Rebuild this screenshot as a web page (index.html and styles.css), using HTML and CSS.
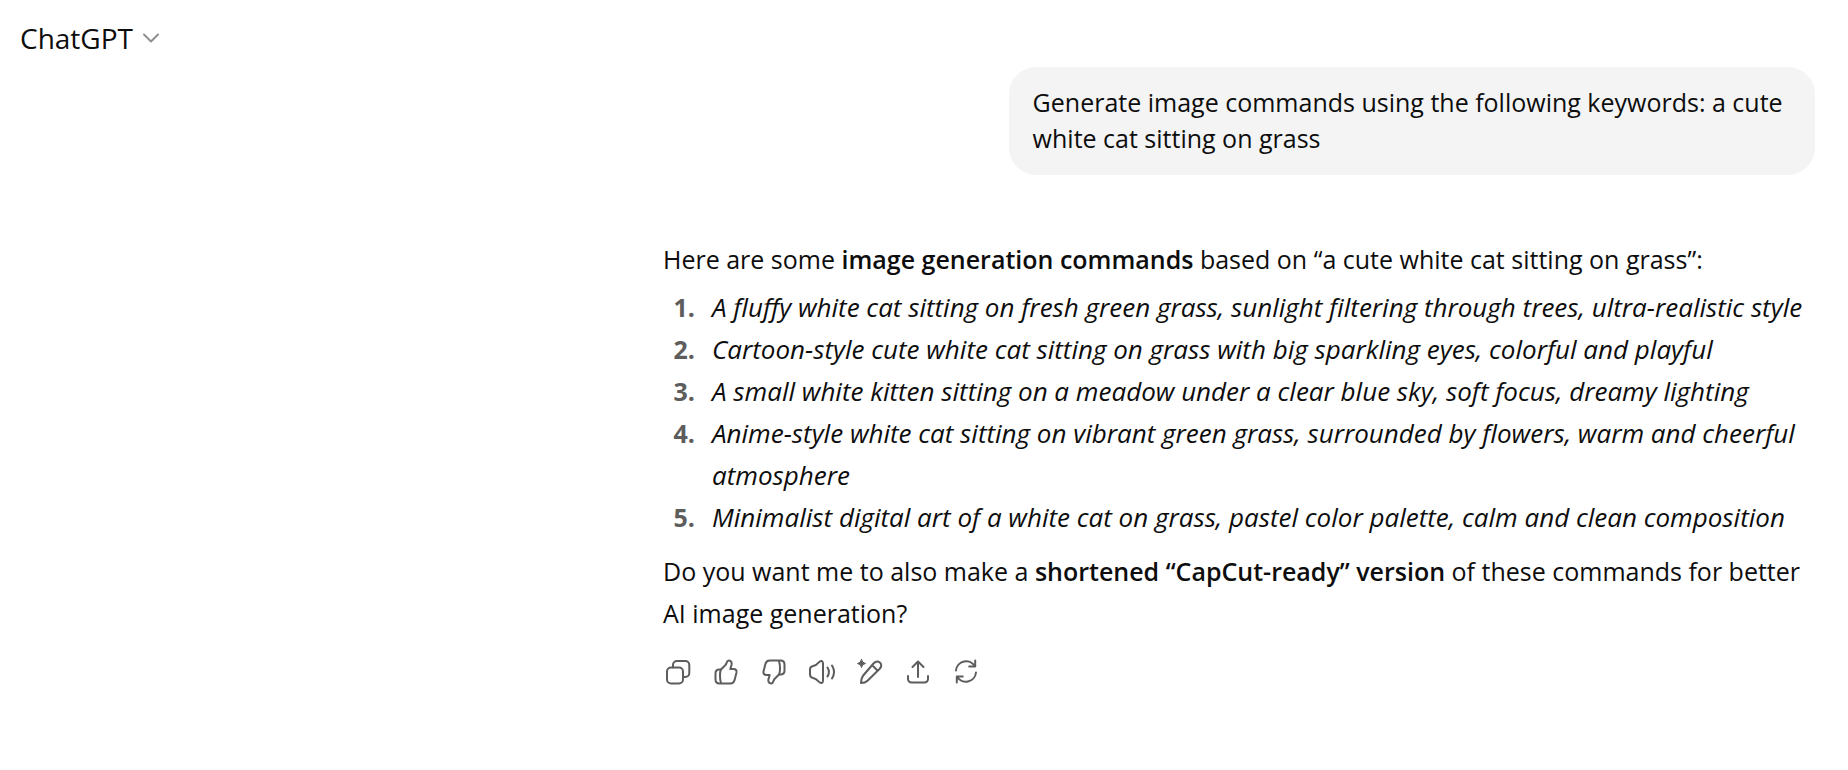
FILE: index.html
```html
<!DOCTYPE html>
<html lang="en">
<head>
<meta charset="utf-8">
<meta name="viewport" content="width=device-width, initial-scale=1">
<title>ChatGPT</title>
<link rel="stylesheet" href="styles.css">
</head>
<body>
<header class="topbar">
  <button class="model-switch" type="button" aria-haspopup="menu">
    <span>ChatGPT</span>
    <svg class="chevron" viewBox="0 0 16 10" aria-hidden="true"><path d="M1 1.5 8 8.5 15 1.5"/></svg>
  </button>
</header>
<main class="thread">
  <section class="turn turn-user">
    <p class="bubble">Generate image commands using the following keywords: a cute white cat sitting on grass</p>
  </section>
  <article class="turn turn-reply">
    <p class="reply-text">Here are some <strong>image generation commands</strong> based on “a cute white cat sitting on grass”:</p>
    <ol class="prompts">
      <li><em>A fluffy white cat sitting on fresh green grass, sunlight filtering through trees, ultra-realistic style</em></li>
      <li><em>Cartoon-style cute white cat sitting on grass with big sparkling eyes, colorful and playful</em></li>
      <li><em>A small white kitten sitting on a meadow under a clear blue sky, soft focus, dreamy lighting</em></li>
      <li><em>Anime-style white cat sitting on vibrant green grass, surrounded by flowers, warm and cheerful atmosphere</em></li>
      <li><em>Minimalist digital art of a white cat on grass, pastel color palette, calm and clean composition</em></li>
    </ol>
    <p class="reply-text">Do you want me to also make a <strong>shortened “CapCut-ready” version</strong> of these commands for better AI image generation?</p>
    <div class="actions">
      <button class="action" type="button" aria-label="Copy">
        <svg class="icon" viewBox="0 0 30 30"><rect x="4" y="10.5" width="16" height="16" rx="4"/><path d="M10 10.5V8a4 4 0 0 1 4-4h8.300a4 4 0 0 1 4 4v8a4 4 0 0 1-4 4H20"/></svg>
      </button>
      <button class="action" type="button" aria-label="Good response">
        <svg class="icon" viewBox="0 0 30 30"><path d="M10 12.500 14.500 8C15.900 6.500 15.500 3.500 17.800 3.500c2.700 0 3.200 2.500 2.700 4.500L19.300 12H22.500c2.300 0 3.400 1.500 3 3.500L23.600 23c-.6 2.400-2.100 3.500-4.300 3.500H8.500C6 26.500 4.500 25 4.500 22.500V16.500c0-2.500 1.500-4 4-4Z"/><path d="M10 12.500C8.500 15 8.800 22 10 26"/></svg>
      </button>
      <button class="action" type="button" aria-label="Bad response">
        <svg class="icon" viewBox="0 0 30 30"><g transform="rotate(180 15 15)"><path d="M10 12.500 14.500 8C15.900 6.500 15.500 3.500 17.800 3.500c2.700 0 3.200 2.500 2.700 4.500L19.300 12H22.500c2.300 0 3.400 1.500 3 3.500L23.600 23c-.6 2.400-2.100 3.500-4.300 3.500H8.500C6 26.500 4.500 25 4.500 22.500V16.500c0-2.500 1.500-4 4-4Z"/><path d="M10 12.500C8.500 15 8.800 22 10 26"/></g></svg>
      </button>
      <button class="action" type="button" aria-label="Read aloud">
        <svg class="icon" viewBox="0 0 30 30"><path d="M5.500 9.300C8.500 8.800 10 7.500 11.800 5.300 13.800 3 16 3.600 16 6.500v17c0 2.900-2.200 3.500-4.200 1.200C10 22.500 8.500 21.200 5.500 20.700 3.500 20.300 3 19.300 3 17.500v-5C3 10.700 3.500 9.700 5.500 9.300Z"/><path d="M20.500 10.500c1.700 2.700 1.700 6.300 0 9M25 8.500c2.500 4 2.500 9 0 13"/></svg>
      </button>
      <button class="action" type="button" aria-label="Edit in canvas">
        <svg class="icon" viewBox="0 0 30 30"><path d="M18.500 6.500C20.800 4.100 23 3.900 24.900 5.600 26.800 7.400 26.700 9.700 24.500 12L12.500 23.700C10.700 25.500 9 26 6 26 6 23 6.500 20.500 8.200 18.500ZM17 8l5.700 5.700"/><path class="solid" d="M6.500 2.500Q7 6 10.500 6.500 7 7 6.500 10.500 6 7 2.500 6.500 6 6 6.500 2.500Z"/></svg>
      </button>
      <button class="action" type="button" aria-label="Share">
        <svg class="icon" viewBox="0 0 30 30"><path d="M15 20V5M9.500 10 15 4.500 20.500 10M5 19v3a3.500 3.500 0 0 0 3.500 3.500h13A3.500 3.500 0 0 0 25 22v-3"/></svg>
      </button>
      <button class="action" type="button" aria-label="Regenerate">
        <svg class="icon" viewBox="0 0 30 30"><path d="M5 13.500A10.200 10.200 0 0 1 24 9.500M24.200 3.500v6h-6M25 15.500A10.200 10.200 0 0 1 6 19.500M5.800 25.500v-6h6"/></svg>
      </button>
    </div>
  </article>
</main>
</body>
</html>
```
FILE: styles.css
```css
*,
*::before {
  box-sizing: border-box;
}

body {
  margin: 0;
  background: #fff;
  color: #0d0d0d;
  font-family: "Segoe UI", "Open Sans", "Noto Sans", sans-serif;
  font-size: 25px;
  line-height: 42px;
}

button {
  padding: 0;
  border: 0;
  background: none;
  color: inherit;
  font: inherit;
  cursor: pointer;
}

svg {
  fill: none;
  stroke: currentColor;
  stroke-width: 2;
  stroke-linecap: round;
  stroke-linejoin: round;
}

.topbar {
  padding: 17px 20px 8px;
}

.model-switch {
  display: flex;
  align-items: center;
  gap: 10px;
  font-size: 28px;
}

.chevron {
  width: 16px;
  height: 10px;
  color: #8f8f8f;
}

.thread {
  max-width: 1185px;
  margin-left: auto;
  padding-right: 33px;
}

.turn-user {
  display: flex;
  justify-content: flex-end;
}

.bubble {
  max-width: 70%;
  margin: 0;
  padding: 17px 24px 19px;
  border-radius: 27px;
  background: #f4f4f4;
  line-height: 36px;
}

.turn-reply {
  margin-top: 63px;
}

.reply-text {
  margin: 0;
}

.reply-text strong {
  font-weight: 600;
}

.prompts {
  margin: 6px 0 12px;
  padding: 0;
  list-style: none;
  counter-reset: prompt;
}

.prompts li {
  display: flex;
  counter-increment: prompt;
}

.prompts li::before {
  content: counter(prompt) ".";
  flex: 0 0 49px;
  padding-right: 17px;
  color: #5d5d5d;
  font-weight: 700;
  text-align: right;
}

.prompts em {
  font-size: 26px;
}

.actions {
  display: flex;
  margin: 14px 0 0 -9px;
  color: #5d5d5d;
}

.action {
  display: grid;
  place-items: center;
  width: 48px;
  height: 48px;
}

.icon {
  width: 30px;
  height: 30px;
}

.icon .solid {
  fill: currentColor;
  stroke-width: 1;
}
```
